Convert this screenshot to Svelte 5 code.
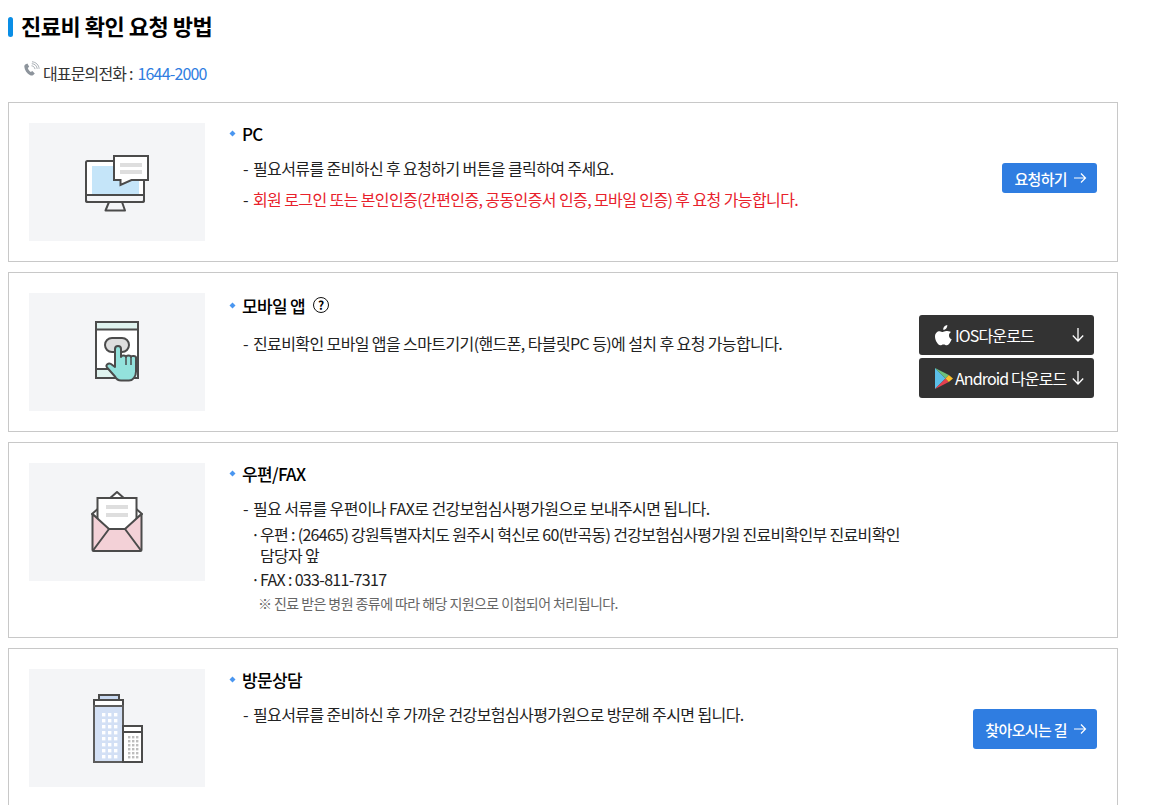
<script>
  const arrowRight = 'M1 6h11M8 1.5 12.5 6 8 10.5';
</script>

<div class="page">
  <h2 class="title">진료비 확인 요청 방법</h2>

  <p class="tel">
    <svg class="tel-icon" width="18" height="18" viewBox="0 0 18 18">
      <path d="M3.2 3.6 5.4 2.6l1.8 3.2-1.4 1.2c.5 1.6 1.6 3 3 3.9l1.5-1 2.5 2.7-1.8 1.6c-.8.5-1.8.5-2.8 0C5 12.600 2.600 9.200 2.300 5.800c-.1-.9.2-1.700.9-2.200z" fill="#8d949c"/>
      <path d="M9.500 4.800c1.800.1 3.300 1.500 3.500 3.300M9.800 2.700c3 .1 5.200 2.300 5.400 5.200M10 .8c3.900.2 6.900 3.200 7.100 7" fill="none" stroke="#a9afb5" stroke-width="1"/>
    </svg>
    <span class="tel-label">대표문의전화 :</span> <span class="tel-num">1644-2000</span>
  </p>

  <section class="card">
    <div class="pic">
      <svg class="ico-pc" width="66" height="58" viewBox="0 0 66 58">
        <rect x="1" y="6" width="58" height="41" rx="1.500" fill="#fff" stroke="#4b4b4b" stroke-width="2"/>
        <rect x="7" y="11" width="47" height="29" fill="#c5e5f9"/>
        <path d="M1 40h58v5a2 2 0 0 1-2 2H3a2 2 0 0 1-2-2z" fill="#f4f5f7" stroke="#4b4b4b" stroke-width="2"/>
        <path d="M24 47h13l3 8.500H20.500z" fill="#f4f5f7" stroke="#4b4b4b" stroke-width="2" stroke-linejoin="round"/>
        <path d="M29 1h34v24H46.500l-11 5v-5H29z" fill="#fff" stroke="#4b4b4b" stroke-width="2"/>
        <rect x="35" y="8" width="22" height="4" fill="#dedede"/>
        <rect x="35" y="15" width="22" height="4" fill="#dedede"/>
      </svg>
    </div>
    <div class="body">
      <h3><i class="dot"></i>PC</h3>
      <p class="line"><span class="dash">-</span> 필요서류를 준비하신 후 요청하기 버튼을 클릭하여 주세요.</p>
      <p class="line second"><span class="dash">-</span> <span class="red">회원 로그인 또는 본인인증(간편인증, 공동인증서 인증, 모바일 인증) 후 요청 가능합니다.</span></p>
    </div>
    <div class="actions">
      <a class="btn" href="#pc">요청하기
        <svg width="14" height="12" viewBox="0 0 14 12"><path d={arrowRight} fill="none" stroke="#fff" stroke-width="1.200"/></svg>
      </a>
    </div>
  </section>

  <section class="card">
    <div class="pic">
      <svg class="ico-app" width="50" height="64" viewBox="0 0 50 64">
        <rect x="1" y="1" width="42" height="56" fill="#fff" stroke="#4b4b4b" stroke-width="2"/>
        <path d="M2 2h40v6H2zM2 48h40v8H2z" fill="#dff3ef"/>
        <path d="M1 8.500h42M1 48h42" stroke="#4b4b4b" stroke-width="2"/>
        <rect x="10" y="17" width="24" height="14" rx="7" fill="#dedede" stroke="#4b4b4b" stroke-width="2"/>
        <path d="M20 28c0-4 6-4 6 0v8c0-2 5-2 5 0 0-2 5-2 5 0 0-1.500 5-1.500 5 .5v14c0 5-3 9-7 9h-8c-3 0-5-2-6-4l-8-9c-2-2.500 1.500-5 4-3.500l4 3z" fill="#93e2dc" stroke="#4b4b4b" stroke-width="2" stroke-linejoin="round"/>
        <path d="M31 36v8M36 36v8" stroke="#4b4b4b" stroke-width="1.500"/>
      </svg>
    </div>
    <div class="body">
      <h3 class="tall"><i class="dot"></i>모바일 앱 <span class="help">?</span></h3>
      <p class="line"><span class="dash">-</span> 진료비확인 모바일 앱을 스마트기기(핸드폰, 타블릿PC 등)에 설치 후 요청 가능합니다.</p>
    </div>
    <div class="actions stack">
      <a class="dl" href="#ios">
        <svg class="dl-icon" width="18" height="21" viewBox="0 0 18 21">
          <path d="M12.300 0c.1 1.300-.3 2.500-1.100 3.400-.8.900-1.800 1.500-3 1.400-.1-1.200.4-2.400 1.100-3.200C10.100.7 11.300.1 12.300 0zM16 7c-1.300.9-2 2-2 3.500 0 1.800 1 3.100 2.700 3.800-.4 1.200-1 2.400-1.800 3.500-.9 1.300-1.800 2.500-3.100 2.500-1.300 0-1.700-.8-3.300-.8-1.500 0-2 .8-3.300.8-1.300 0-2.200-1.200-3.100-2.500C.6 15.800 0 13.500 0 11.600c0-3.500 2.300-5.400 4.600-5.400 1.300 0 2.300.8 3.100.8.8 0 2-.9 3.400-.9 1.300 0 3.800.4 4.900 1z" fill="#fff"/>
        </svg>
        <span class="dl-text">IOS다운로드</span>
        <svg class="dl-arrow" width="12" height="14" viewBox="0 0 12 14"><path d="M6 0v13M.8 7.500 6 13l5.200-5.500" fill="none" stroke="#fff" stroke-width="1.300"/></svg>
      </a>
      <a class="dl" href="#android">
        <svg class="dl-icon" width="18" height="21" viewBox="0 0 18 21">
          <path d="M0 0v21l10.500-10.500z" fill="#5bbfe8"/>
          <path d="M0 0l10.500 10.500 3.300-3.500z" fill="#6cc17b"/>
          <path d="M0 21l10.500-10.500 3.300 3.500z" fill="#e5404f"/>
          <path d="M13.800 7 18 10.500 13.800 14l-3.300-3.500z" fill="#fbc02d"/>
        </svg>
        <span class="dl-text">Android 다운로드</span>
        <svg class="dl-arrow" width="12" height="14" viewBox="0 0 12 14"><path d="M6 0v13M.8 7.500 6 13l5.200-5.500" fill="none" stroke="#fff" stroke-width="1.300"/></svg>
      </a>
    </div>
  </section>

  <section class="card">
    <div class="pic">
      <svg width="52" height="62" viewBox="0 0 52 62">
        <path d="M1 23 26 1l25 22-25 21z" fill="#fff" stroke="#4b4b4b" stroke-width="2" stroke-linejoin="round"/>
        <rect x="6.500" y="7" width="39" height="34" fill="#fff" stroke="#4b4b4b" stroke-width="2"/>
        <rect x="15" y="14" width="22" height="4" fill="#dedede"/>
        <rect x="15" y="22" width="22" height="4" fill="#dedede"/>
        <path d="M1.500 23 18 38h16l16.500-15v36a1 1 0 0 1-1 1h-47a1 1 0 0 1-1-1z" fill="#f3d1d7" stroke="#4b4b4b" stroke-width="2" stroke-linejoin="round"/>
        <path d="M2 59.500 18 38M50 59.500 34 38" stroke="#4b4b4b" stroke-width="2"/>
      </svg>
    </div>
    <div class="body">
      <h3><i class="dot"></i>우편/FAX</h3>
      <p class="line"><span class="dash">-</span> 필요 서류를 우편이나 FAX로 건강보험심사평가원으로 보내주시면 됩니다.</p>
      <ul class="sub">
        <li>우편 : (26465) 강원특별자치도 원주시 혁신로 60(반곡동) 건강보험심사평가원 진료비확인부 진료비확인 담당자 앞</li>
        <li>FAX : 033-811-7317</li>
      </ul>
      <p class="note">※ 진료 받은 병원 종류에 따라 해당 지원으로 이첩되어 처리됩니다.</p>
    </div>
    <div class="actions"></div>
  </section>

  <section class="card">
    <div class="pic">
      <svg class="ico-map" width="51" height="69" viewBox="0 0 51 69">
        <rect x="6" y="1" width="20" height="5" fill="#c9d9f1" stroke="#4b4b4b" stroke-width="2"/>
        <rect x="1" y="6" width="29" height="6" fill="#fff" stroke="#4b4b4b" stroke-width="2"/>
        <rect x="1" y="12" width="29" height="56" fill="#d3e0f5" stroke="#5c5c5c" stroke-width="2"/>
        <g fill="#fff">
          {#each [0, 1, 2, 3, 4, 5, 6, 7] as r}
            {#each [0, 1, 2] as c}
              <rect x={9 + c * 6} y={19 + r * 6} width="3.400" height="3.400"/>
            {/each}
          {/each}
        </g>
        <rect x="30" y="32" width="19" height="36" fill="#fff" stroke="#4b4b4b" stroke-width="2"/>
        <path d="M30 38h19" stroke="#4b4b4b" stroke-width="2"/>
        <g fill="#bdbdbd">
          {#each [0, 1, 2, 3, 4, 5] as r}
            {#each [0, 1, 2] as c}
              <rect x={35 + c * 4} y={42 + r * 4} width="2.400" height="2.400"/>
            {/each}
          {/each}
        </g>
      </svg>
    </div>
    <div class="body">
      <h3><i class="dot"></i>방문상담</h3>
      <p class="line"><span class="dash">-</span> 필요서류를 준비하신 후 가까운 건강보험심사평가원으로 방문해 주시면 됩니다.</p>
    </div>
    <div class="actions">
      <a class="btn tall" href="#map">찾아오시는 길
        <svg width="14" height="12" viewBox="0 0 14 12"><path d={arrowRight} fill="none" stroke="#fff" stroke-width="1.200"/></svg>
      </a>
    </div>
  </section>
</div>

<style>
  :global(body) {
    font-family: "Noto Sans CJK KR", "Noto Sans", sans-serif;
    color: #222;
    background: #fff;
    overflow: hidden;
  }
  .page { width: 1110px; padding: 0 0 0 8px; }

  .title {
    margin: 0; padding: 11px 0 0 13px; position: relative;
    font-size: 22px; line-height: 28px; font-weight: 700; color: #000; letter-spacing: -0.5px;
  }
  .title::before {
    content: ''; position: absolute; left: 0; top: 17px;
    width: 5px; height: 20px; border-radius: 3px; background: #0a8ee6;
  }

  .tel {
    display: flex; align-items: center; gap: 3px;
    margin: 22px 0 17px 14px; height: 24px;
    font-size: 16px; letter-spacing: -0.85px; color: #333;
  }
  .tel-icon { margin-top: -6px; }
  .tel-label { white-space: pre; }
  .tel-num { color: #2f7de1; margin-left: 2px; }

  .card {
    display: flex; box-sizing: border-box; min-height: 160px;
    margin-bottom: 10px; padding: 20px;
    border: 1px solid #c8c8c8;
  }
  .pic {
    flex: none; display: flex; align-items: center; justify-content: center;
    width: 176px; height: 118px; background: #f4f5f7;
  }
  .ico-pc { margin: 4px 0 0 2px; }
  .ico-app { margin: 2px 0 0 6px; }
  .ico-map { margin: 1px 0 0 2px; }
  .body { flex: 1; min-width: 0; padding-left: 24px; }

  h3 {
    display: flex; align-items: center; position: relative;
    margin: -2px 0 0; padding-left: 13px; height: 24px;
    font-size: 17px; font-weight: 500; color: #000; letter-spacing: -0.67px;
  }
  h3.tall { margin: 0 0 14px; }
  .dot {
    position: absolute; left: 1px; top: 10px;
    width: 5px; height: 5px; background: #4a96f0; transform: rotate(45deg) scale(0.85);
  }
  .help {
    display: inline-flex; align-items: center; justify-content: center;
    width: 14px; height: 14px; margin-left: 8px;
    border: 1.500px solid #111; border-radius: 50%;
    font-size: 12px; font-weight: 700; line-height: 1; letter-spacing: 0;
  }

  .line {
    margin: 11px 0 0 14px; font-size: 16px; line-height: 24px;
    letter-spacing: -0.6px; color: #222;
  }
  .line.second { margin-top: 7px; }
  .dash { margin-right: 2px; }
  .red { color: #e8212b; }

  .sub { list-style: none; margin: 4px 0 0 25px; padding: 0; width: 660px; }
  .sub li {
    position: relative; padding-left: 6px; word-break: keep-all;
    font-size: 16px; line-height: 21px; letter-spacing: -0.68px; margin-bottom: 3px; color: #222;
  }
  .sub li::before { content: '·'; position: absolute; left: -3px; top: 0; }
  .note {
    margin: 3px 0 4px 29px; font-size: 14px; line-height: 20px;
    letter-spacing: -0.57px; color: #666;
  }

  .actions {
    flex: none; width: 178px; display: flex; flex-direction: column;
    align-items: flex-end; padding-top: 40px;
  }
  .stack { gap: 3px; padding-top: 22px; }

  .btn {
    display: flex; align-items: center; gap: 6px; box-sizing: border-box;
    height: 30px; padding: 0 10px 0 12px; border-radius: 3px;
    background: #2f7de1; color: #fff; text-decoration: none;
    font-size: 15px; font-weight: 500; letter-spacing: -0.65px; white-space: nowrap;
  }
  .btn.tall { height: 40px; }

  .dl {
    display: flex; align-items: center; box-sizing: border-box;
    width: 175px; height: 40px; padding: 0 10px 0 16px; margin-right: 3px; border-radius: 3px;
    background: #333; color: #fff; text-decoration: none;
    font-size: 16px; letter-spacing: -0.88px; white-space: nowrap;
  }
  .dl-icon { flex: none; margin-right: 2px; }
  .dl-arrow { flex: none; margin-left: auto; }
</style>
